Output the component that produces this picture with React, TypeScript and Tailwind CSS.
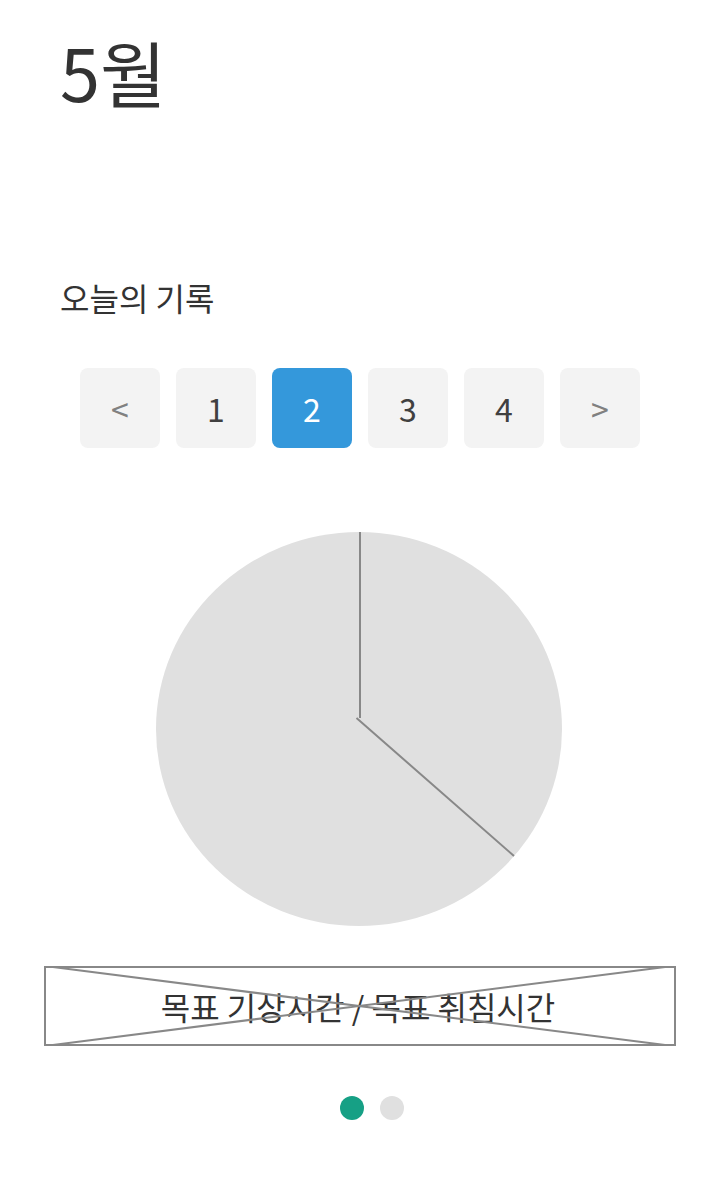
const pages = ["1", "2", "3", "4"];

export default function App() {
  return (
    <main className="flex min-h-screen flex-col bg-white font-['Noto_Sans_CJK_KR','Noto_Sans',sans-serif] text-[#333]">
      <h1 className="px-15 pt-6 text-[72px] leading-[94px]">5월</h1>
      <h2 className="mt-[155px] px-15 text-[32px] leading-12">오늘의 기록</h2>
      <nav aria-label="기록" className="mt-[47px] flex justify-center gap-4 text-[32px] text-[#404040]">
        <button type="button" aria-label="이전" className="size-20 rounded-lg bg-[#f3f3f3] text-[#808080]">&lt;</button>
        {pages.map((page) => (
          <button
            key={page}
            type="button"
            aria-current={page === "2" ? "page" : undefined}
            className={page === "2" ? "size-20 rounded-lg bg-[#3498db] text-white" : "size-20 rounded-lg bg-[#f3f3f3]"}
          >
            {page}
          </button>
        ))}
        <button type="button" aria-label="다음" className="size-20 rounded-lg bg-[#f3f3f3] text-[#808080]">&gt;</button>
      </nav>
      <svg className="mx-auto mt-21 h-[394px] w-[408px]" viewBox="0 0 408 394" fill="none" aria-hidden="true">
        <ellipse cx="203" cy="197" rx="203" ry="197" fill="#e0e0e0" />
        <path d="M204 0V186M200.500 186L358 324" stroke="#888" strokeWidth="2" />
      </svg>
      <section className="relative mx-11 mt-10 flex h-20 items-center justify-center border-2 border-[#888] pr-1">
        <p className="text-[32px] leading-12">목표 기상시간 / 목표 취침시간</p>
        <svg className="absolute inset-0 size-full overflow-hidden" viewBox="0 0 628 76" preserveAspectRatio="none" fill="none" aria-hidden="true">
          <path d="M-1 -2L627 78M627 -2L-1 78" stroke="#888" strokeWidth="2" />
        </svg>
      </section>
      <div className="mt-[50px] flex justify-center gap-4 pl-6">
        <button type="button" aria-label="페이지 1" className="size-6 rounded-full bg-[#16a085]" />
        <button type="button" aria-label="페이지 2" className="size-6 rounded-full bg-[#e0e0e0]" />
      </div>
    </main>
  );
}
